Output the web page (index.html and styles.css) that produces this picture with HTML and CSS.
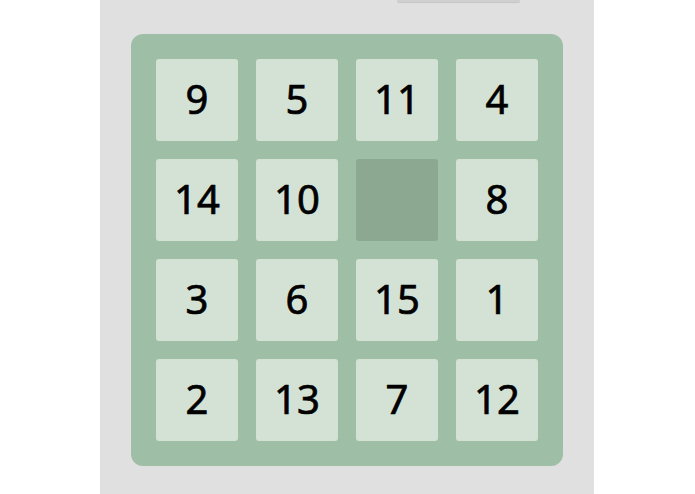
FILE: index.html
```html
<!DOCTYPE html>
<html lang="en">
<head>
    <meta charset="UTF-8">
    <meta name="viewport" content="width=device-width, initial-scale=1.0">
    <title>15 Puzzle</title>
    <link rel="stylesheet" href="styles.css">
</head>
<body>
    <div class="panel">
        <div class="controls">
            <div class="btn"></div>
        </div>

        <div class="board">
            <div class="tile">9</div>
            <div class="tile">5</div>
            <div class="tile">11</div>
            <div class="tile">4</div>
            <div class="tile">14</div>
            <div class="tile">10</div>
            <div class="tile empty"></div>
            <div class="tile">8</div>
            <div class="tile">3</div>
            <div class="tile">6</div>
            <div class="tile">15</div>
            <div class="tile">1</div>
            <div class="tile">2</div>
            <div class="tile">13</div>
            <div class="tile">7</div>
            <div class="tile">12</div>
        </div>
    </div>
</body>
</html>
```

FILE: styles.css
```css
body {
    margin: 0;
    background-color: #ffffff;
    font-family: "Noto Sans", "Open Sans", sans-serif;
}
.panel {
    width: 494px;
    min-height: 494px;
    margin-left: 100px;
    padding: 0 31px;
    box-sizing: border-box;
    background-color: #e0e0e0;
    overflow: hidden;
}
.controls {
    display: flex;
    justify-content: flex-end;
    height: 2px;
    padding-right: 43px;
}
.btn {
    width: 123px;
    height: 2px;
    border-radius: 0 0 3px 3px;
    background-color: #d0d0d0;
    box-shadow: 0 1px 1px rgba(0,0,0,0.12);
}
.board {
    display: grid;
    grid-template-columns: repeat(4, 82px);
    grid-auto-rows: 82px;
    gap: 18px;
    width: 432px;
    height: 432px;
    margin-top: 32px;
    padding: 25px;
    box-sizing: border-box;
    background-color: #9fbea6;
    border-radius: 12px;
}
.tile {
    display: flex;
    align-items: center;
    justify-content: center;
    padding-bottom: 4px;
    box-sizing: border-box;
    background-color: #d3e2d5;
    border-radius: 3px;
    color: #000;
    font-size: 40px;
    font-weight: 400;
    -webkit-text-stroke: 0.7px #000;
}
.tile.empty {
    background-color: #8ca890;
}
```
